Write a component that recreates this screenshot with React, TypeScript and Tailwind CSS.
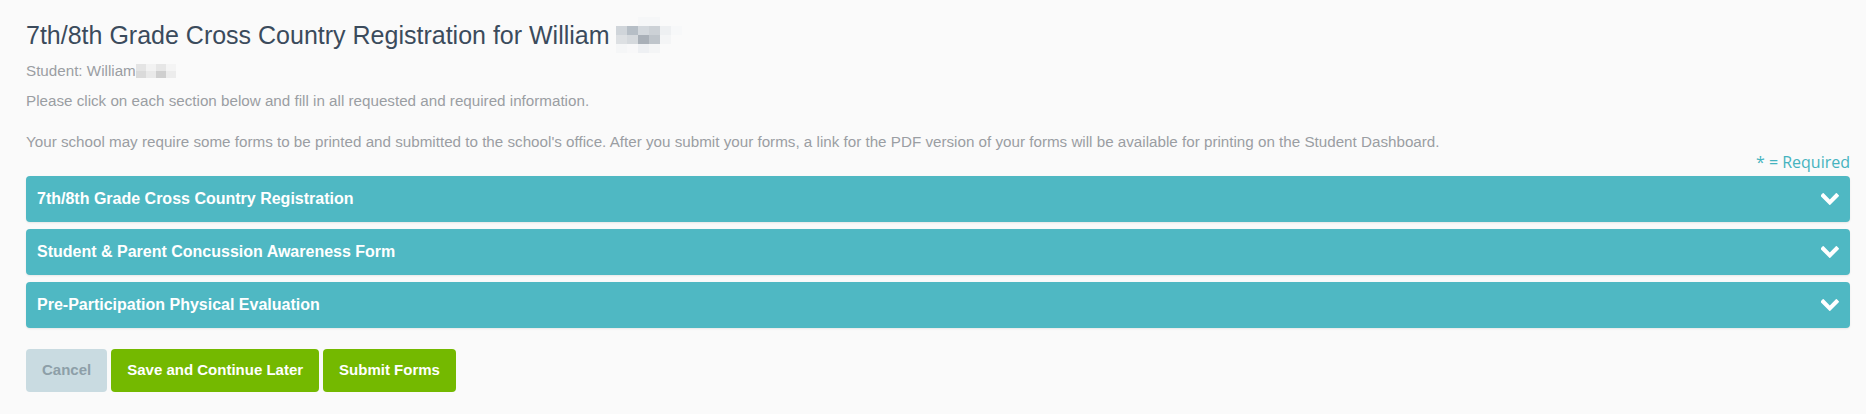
import { useState } from "react";

const SECTIONS = [
  "7th/8th Grade Cross Country Registration",
  "Student & Parent Concussion Awareness Form",
  "Pre-Participation Physical Evaluation",
];

// pixelated blur over the last name (colours read off the screenshot)
const TITLE_BLUR = [
  ["#fafafa", "#fafafa", "#f6f7f8", "#f6f7f8", "#fafafa", "#fafafa"],
  ["#d0d5da", "#b6bec6", "#d3d8dd", "#ccd1d6", "#eef0f2", "#f7f8f9"],
  ["#dde0e3", "#d5d9dd", "#a9b0b8", "#bfc5cb", "#f4f5f6", "#fafafa"],
  ["#f5f6f7", "#f8f8f9", "#eef0f3", "#f4f5f6", "#fafafa", "#fafafa"],
];

const STUDENT_BLUR = [
  ["#e4e4e4", "#f2f2f2", "#e6e6e6", "#f4f4f4"],
  ["#dadada", "#e9e9e9", "#cfcfcf", "#ececec"],
];

function Pixels({ rows, size }: { rows: string[][]; size: string }) {
  return (
    <span className="inline-flex flex-col align-middle">
      {rows.map((row, i) => (
        <span key={i} className="flex">
          {row.map((c, j) => (
            <span key={j} className={size} style={{ backgroundColor: c }} />
          ))}
        </span>
      ))}
    </span>
  );
}

function Chevron() {
  return (
    <svg viewBox="126 530 1576 1040" className="w-[18px] h-[12px]" fill="white">
      <path d="M1683 808l-742 741q-19 19-45 19t-45-19l-742-741q-19-19-19-45.5t19-45.5l166-165q19-19 45-19t45 19l531 531 531-531q19-19 45-19t45 19l166 165q19 19 19 45.5t-19 45.5z" />
    </svg>
  );
}

export default function App() {
  const [open, setOpen] = useState<number | null>(null);

  return (
    <div className="min-h-screen bg-[#fafafa] pl-[26px] pr-[16px] pt-[20px] font-['Liberation_Sans',Arial,sans-serif]">
      {/* Header */}
      <h1 className="h-[30px] text-[25px] leading-[30px] text-[#3b4b5c] flex items-start">
        <span>7th/8th Grade Cross Country Registration for William</span>
        <span className="ml-[6px] -mt-[3px] h-[30px]">
          <Pixels rows={TITLE_BLUR} size="w-[11px] h-[9px]" />
        </span>
      </h1>

      <div className="mt-[11px] text-[15.2px] leading-[20px] text-[#9a9ea3] flex items-center">
        <span>Student: William</span>
        <Pixels rows={STUDENT_BLUR} size="w-[10px] h-[7px]" />
      </div>

      <p className="mt-[10px] text-[15.2px] leading-[20px] text-[#9a9ea3]">
        Please click on each section below and fill in all requested and required information.
      </p>

      <p className="mt-[21px] text-[15.2px] leading-[20px] text-[#9a9ea3]">
        Your school may require some forms to be printed and submitted to the school's office. After you submit your
        forms, a link for the PDF version of your forms will be available for printing on the Student Dashboard.
      </p>

      <div className="flex justify-end">
        <span className="text-[16px] leading-[20px] font-medium text-[#45b3bf] font-['Open_Sans',sans-serif]">
          * = Required
        </span>
      </div>

      {/* Form sections */}
      <div className="mt-[4px] flex flex-col gap-[7px]">
        {SECTIONS.map((title, i) => (
          <button
            key={title}
            onClick={() => setOpen(open === i ? null : i)}
            className="h-[46px] w-full flex items-center justify-between pl-[11px] pr-[11px] rounded-[4px] bg-[#4fb8c3] shadow-[0_1px_2px_rgba(0,0,0,0.08)] text-left"
          >
            <span className="text-white text-[16px] font-bold">{title}</span>
            <Chevron />
          </button>
        ))}
      </div>

      {/* Actions */}
      <div className="mt-[21px] flex gap-[4px]">
        <button className="h-[43px] px-[16px] rounded-[4px] bg-[#c9dbe1] text-[#8d9fa8] text-[15px] font-bold">
          Cancel
        </button>
        <button className="h-[43px] px-[16px] rounded-[4px] bg-[#74b900] text-white text-[15px] font-bold">
          Save and Continue Later
        </button>
        <button className="h-[43px] px-[16px] rounded-[4px] bg-[#74b900] text-white text-[15px] font-bold">
          Submit Forms
        </button>
      </div>
    </div>
  );
}
